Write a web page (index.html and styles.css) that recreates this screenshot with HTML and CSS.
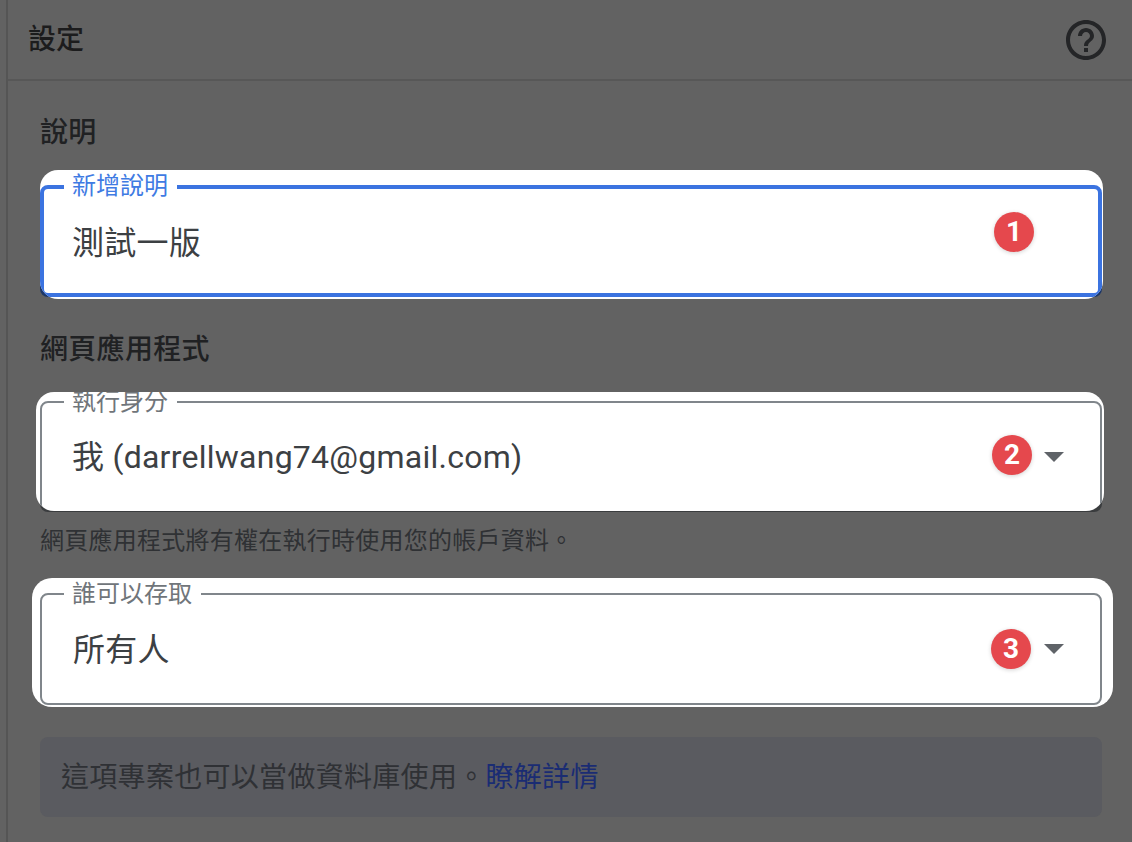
FILE: index.html
```html
<!DOCTYPE html>
<html lang="zh-Hant">
<head>
<meta charset="utf-8">
<title>設定</title>
<link rel="stylesheet" href="styles.css">
</head>
<body>
<div class="panel">
  <header class="panel-head">
    <h1 class="panel-title">設定</h1>
    <svg class="help" viewBox="0 0 24 24" aria-hidden="true"><path d="M11 18h2v-2h-2v2zm1-16C6.48 2 2 6.48 2 12s4.48 10 10 10 10-4.48 10-10S17.52 2 12 2zm0 18c-4.41 0-8-3.59-8-8s3.59-8 8-8 8 3.59 8 8-3.59 8-8 8zm0-14c-2.21 0-4 1.79-4 4h2c0-1.1.9-2 2-2s2 .9 2 2c0 2-3 1.75-3 5h2c0-2.25 3-2.5 3-5 0-2.21-1.79-4-4-4z"/></svg>
  </header>
  <main class="panel-body">
    <h2 class="section-title first">說明</h2>
    <div class="field field-desc">
      <div class="spot">
        <div class="outline"><span class="legend">新增說明</span></div>
      </div>
      <span class="value">測試一版</span>
      <span class="badge">1</span>
    </div>

    <h2 class="section-title second">網頁應用程式</h2>
    <div class="field field-run">
      <div class="spot">
        <div class="outline"><span class="legend">執行身分</span></div>
      </div>
      <span class="value">我 (darrellwang74@gmail.com)</span>
      <span class="badge">2</span>
      <svg class="caret" viewBox="0 0 20 10" aria-hidden="true"><path d="M0 0h20L10 10z"/></svg>
    </div>
    <p class="helper">網頁應用程式將有權在執行時使用您的帳戶資料。</p>

    <div class="field field-access">
      <div class="spot">
        <div class="outline"><span class="legend">誰可以存取</span></div>
      </div>
      <span class="value">所有人</span>
      <span class="badge">3</span>
      <svg class="caret" viewBox="0 0 20 10" aria-hidden="true"><path d="M0 0h20L10 10z"/></svg>
    </div>

    <div class="notice">這項專案也可以當做資料庫使用。<a class="notice-link" href="#">瞭解詳情</a></div>
  </main>
</div>
</body>
</html>
```
FILE: styles.css
```css
html, body {
  margin: 0;
  height: 100%;
  overflow: hidden;
  background: #626262;
}

body {
  font-family: Roboto, "Noto Sans CJK TC", sans-serif;
  color: #3c4043;
}

.panel {
  margin-left: 6px;
  min-height: 100vh;
  box-sizing: border-box;
  border-left: 2px solid #555555;
}

.panel-head {
  height: 81px;
  box-sizing: border-box;
  display: flex;
  align-items: center;
  justify-content: space-between;
  padding: 0 22px 0 20px;
  border-bottom: 2px solid #575757;
}

.panel-title {
  margin: 0;
  font-size: 28px;
  line-height: 40px;
  font-weight: 500;
  color: #1c1c1d;
}

.help {
  width: 48px;
  height: 48px;
  fill: #242527;
}

.panel-body {
  padding: 0 30px 0 32px;
}

.section-title {
  margin: 0;
  font-size: 28px;
  line-height: 40px;
  font-weight: 500;
  letter-spacing: 0.3px;
  color: #202123;
}

.section-title.first {
  margin-top: 32px;
  margin-bottom: 32px;
}

.section-title.second {
  margin-top: 33px;
  margin-bottom: 31px;
}

.field {
  position: relative;
  height: 112px;
  box-sizing: border-box;
  display: flex;
  align-items: center;
  padding: 0 38px 0 32px;
  border-radius: 8px;
}

.field-desc { background: #1c3769; }
.field-run { height: 111px; background: #3a3c3e; }

.spot {
  position: absolute;
  background: #ffffff;
  overflow: hidden;
}

.field-desc .spot { inset: -15px -1px -2px 0; border-radius: 18px; }
.field-run .spot { inset: -9px -2px 1px -4px; border-radius: 18px; }
.field-access .spot { inset: -15px -11px -2px -8px; border-radius: 20px; }

.outline {
  position: absolute;
  box-sizing: border-box;
  border: 2px solid #80868b;
  border-radius: 8px;
}

.field-desc .outline {
  inset: 15px 1px 2px 0;
  border: 4px solid #3b73e0;
}

.field-run .outline { inset: 9px 2px -2px 4px; }
.field-access .outline { inset: 15px 11px 2px 8px; }

.legend {
  position: absolute;
  left: 22px;
  top: -10px;
  padding: 0 9px 0 8px;
  height: 18px;
  font-size: 24px;
  line-height: 18px;
  background: #ffffff;
  color: #70757a;
  white-space: nowrap;
}

.field-desc .legend {
  left: 20px;
  top: -12px;
  color: #3f7be3;
}

.value {
  position: relative;
  font-size: 32px;
  line-height: 44px;
  letter-spacing: 0.25px;
  color: #3c4043;
  white-space: nowrap;
}

.field-desc .value { top: 2px; }
.field-access .value { top: 1px; left: 1px; }

.badge {
  position: absolute;
  width: 40px;
  height: 40px;
  border-radius: 50%;
  background: #e5484d;
  color: #ffffff;
  font-size: 28px;
  font-weight: 700;
  line-height: 40px;
  text-align: center;
  box-shadow: 0 1px 4px rgba(0, 0, 0, 0.18);
}

.field-desc .badge { left: 954px; top: 27px; }
.field-run .badge { left: 952px; top: 34px; }
.field-access .badge { left: 951px; top: 36px; }

.caret {
  position: relative;
  width: 20px;
  height: 10px;
  margin-left: auto;
  fill: #5f6368;
}

.helper {
  margin: 13px 0 36px;
  font-size: 24px;
  line-height: 32px;
  letter-spacing: 0.25px;
  color: #2f3134;
}

.notice {
  margin-top: 32px;
  height: 80px;
  box-sizing: border-box;
  display: flex;
  align-items: center;
  padding: 0 21px 4px;
  border-radius: 8px;
  background: #5a5b60;
  font-size: 28px;
  letter-spacing: 0.3px;
  color: #2f3135;
}

.notice-link {
  color: #1a2c73;
  text-decoration: none;
}
```
